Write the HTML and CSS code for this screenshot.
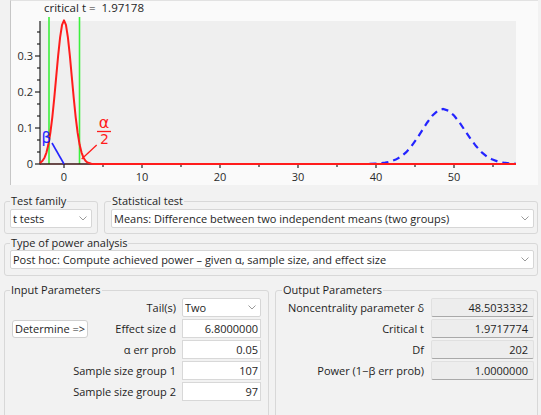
FILE: index.html
```html
<!DOCTYPE html>
<html>
<head>
<meta charset="utf-8">
<link rel="stylesheet" href="styles.css">
</head>
<body>
<div class="chart">
<svg width="527" height="184" viewBox="11 1 527 184">
  <rect class="plotbg" x="40" y="21" width="476" height="143"/>
  <text class="title" x="44" y="12" xml:space="preserve">critical t =  1.97178</text>
  <line class="green" x1="49" y1="17" x2="49" y2="164"/>
  <line class="green" x1="79.5" y1="17" x2="79.5" y2="164"/>
  <g class="axis">
    <line x1="40" y1="21" x2="40" y2="164.5"/>
    <line x1="35" y1="164" x2="40" y2="164"/>
    <line x1="35" y1="128" x2="40" y2="128"/>
    <line x1="35" y1="92" x2="40" y2="92"/>
    <line x1="35" y1="56" x2="40" y2="56"/>
    <line x1="37" y1="152" x2="40" y2="152"/>
    <line x1="37" y1="140" x2="40" y2="140"/>
    <line x1="37" y1="116" x2="40" y2="116"/>
    <line x1="37" y1="104" x2="40" y2="104"/>
    <line x1="37" y1="80" x2="40" y2="80"/>
    <line x1="37" y1="68" x2="40" y2="68"/>
    <line x1="37" y1="44" x2="40" y2="44"/>
    <line x1="37" y1="32" x2="40" y2="32"/>
    <line x1="64" y1="164" x2="64" y2="168"/>
    <line x1="142" y1="164" x2="142" y2="168"/>
    <line x1="220" y1="164" x2="220" y2="168"/>
    <line x1="298" y1="164" x2="298" y2="168"/>
    <line x1="376" y1="164" x2="376" y2="168"/>
    <line x1="454" y1="164" x2="454" y2="168"/>
    <line x1="103" y1="164" x2="103" y2="167"/>
    <line x1="181" y1="164" x2="181" y2="167"/>
    <line x1="259" y1="164" x2="259" y2="167"/>
    <line x1="337" y1="164" x2="337" y2="167"/>
    <line x1="415" y1="164" x2="415" y2="167"/>
    <line x1="493" y1="164" x2="493" y2="167"/>
  </g>
  <g class="ylab">
    <text x="33" y="60">0.3</text>
    <text x="33" y="96">0.2</text>
    <text x="33" y="132">0.1</text>
    <text x="33" y="168">0</text>
  </g>
  <g class="xlab">
    <text x="64" y="181">0</text>
    <text x="142" y="181">10</text>
    <text x="220" y="181">20</text>
    <text x="298" y="181">30</text>
    <text x="376" y="181">40</text>
    <text x="454" y="181">50</text>
  </g>
  <line class="xaxis" x1="40" y1="164" x2="516" y2="164"/>
  <path class="blued" d="M369.5,163.9 L380,163.4 L385.25,162.7 L390.5,161.6 L395.75,159.6 L401,156.6 L406.25,152.1 L411.5,146.1 L416.75,138.8 L422,130.6 L427.25,122.5 L432.5,115.5 L437.75,110.7 L443,109 L448.5,110.7 L454,115.5 L459.5,122.5 L465,130.6 L470.5,138.8 L476,146.1 L481.5,152.1 L487,156.6 L492.5,159.6 L498,161.6 L503.5,162.7 L509,163.4 L516,163.8"/>
  <path class="red" d="M40,163.2 L40.6,162.4 L42.55,160.7 L44.5,157.7 L46.45,152.6 L48.4,144.6 L50.35,132.9 L52.3,117.4 L54.25,98.2 L56.2,76.9 L58.15,55.6 L60.1,37.3 L62.05,24.8 L64,20.4 L65.95,24.8 L67.9,37.3 L69.85,55.6 L71.8,76.9 L73.75,98.2 L75.7,117.4 L77.65,132.9 L79.6,144.6 L81.55,152.6 L83.5,157.7 L85.45,160.7 L87.4,162.4 L91.3,163.7 L95,164 L516,164"/>
  <line class="blue" x1="52" y1="143" x2="64" y2="164"/>
  <text class="beta" x="41.5" y="143">β</text>
  <line class="redt" x1="96.7" y1="145" x2="81.7" y2="159"/>
  <text class="alpha" x="104" y="128">α</text>
  <line class="redt" x1="97" y1="131.5" x2="111" y2="131.5"/>
  <text class="two" x="104.5" y="144">2</text>
</svg>
</div>

<div class="row1">
  <fieldset class="group tf">
    <legend>Test family</legend>
    <div class="combo"><span class="txt">t tests</span><svg class="chev" width="8" height="5" viewBox="0 0 8 5"><path d="M0.5 0.5 L4 4 L7.5 0.5"/></svg></div>
  </fieldset>
  <fieldset class="group st">
    <legend>Statistical test</legend>
    <div class="combo"><span class="txt">Means: Difference between two independent means (two groups)</span><svg class="chev" width="8" height="5" viewBox="0 0 8 5"><path d="M0.5 0.5 L4 4 L7.5 0.5"/></svg></div>
  </fieldset>
</div>

<fieldset class="group pa">
  <legend>Type of power analysis</legend>
  <div class="combo"><span class="txt">Post hoc: Compute achieved power – given α, sample size, and effect size</span><svg class="chev" width="8" height="5" viewBox="0 0 8 5"><path d="M0.5 0.5 L4 4 L7.5 0.5"/></svg></div>
</fieldset>

<div class="params">
  <fieldset class="group in">
    <legend>Input Parameters</legend>
    <div class="prow"><span class="lbl">Tail(s)</span><div class="combo small"><span class="txt">Two</span><svg class="chev" width="8" height="5" viewBox="0 0 8 5"><path d="M0.5 0.5 L4 4 L7.5 0.5"/></svg></div></div>
    <div class="prow"><button class="btn">Determine =&gt;</button><span class="lbl">Effect size d</span><div class="field">6.8000000</div></div>
    <div class="prow"><span class="lbl">α err prob</span><div class="field">0.05</div></div>
    <div class="prow"><span class="lbl">Sample size group 1</span><div class="field">107</div></div>
    <div class="prow"><span class="lbl">Sample size group 2</span><div class="field">97</div></div>
  </fieldset>
  <fieldset class="group out">
    <legend>Output Parameters</legend>
    <div class="prow"><span class="lbl">Noncentrality parameter δ</span><div class="ofield">48.5033332</div></div>
    <div class="prow"><span class="lbl">Critical t</span><div class="ofield">1.9717774</div></div>
    <div class="prow"><span class="lbl">Df</span><div class="ofield">202</div></div>
    <div class="prow"><span class="lbl">Power (1−β err prob)</span><div class="ofield">1.0000000</div></div>
  </fieldset>
</div>
</body>
</html>
```

FILE: styles.css
```css
* { box-sizing: border-box; }
html, body { margin: 0; padding: 0; }
body {
  width: 541px;
  height: 415px;
  overflow: hidden;
  background: #f2f2f2;
  font-family: "Open Sans", "DejaVu Sans", sans-serif;
  font-size: 11px;
  color: #1e1e1e;
}

/* chart */
.chart {
  margin-left: 10px;
  width: 528px;
  height: 185px;
  background: #fafafa;
  border-left: 1px solid #c6c6c6;
  border-top: 1px solid #e2e2e2;
}
.chart svg { display: block; }
.plotbg { fill: #efefef; }
.title { font-family: "Open Sans", sans-serif; font-size: 11.5px; fill: #1e1e1e; white-space: pre; }
.green { stroke: #3cf03c; stroke-width: 1.6; }
.axis line { stroke: #202020; stroke-width: 1.2; }
.xaxis { stroke: #3a1010; stroke-width: 1.6; }
.ylab text { font-family: "Open Sans", sans-serif; font-size: 11px; fill: #2a2a2a; text-anchor: end; }
.xlab text { font-family: "Open Sans", sans-serif; font-size: 11px; fill: #2a2a2a; text-anchor: middle; }
.red { fill: none; stroke: #ff1c1c; stroke-width: 2; stroke-linejoin: round; }
.redt { stroke: #ff1c1c; stroke-width: 1.3; }
.blue { stroke: #2424ff; stroke-width: 1.6; }
.blued { fill: none; stroke: #2424ff; stroke-width: 2.2; stroke-dasharray: 7 5; }
.beta { font-family: "DejaVu Sans", sans-serif; font-size: 15px; fill: #2424ff; }
.alpha { font-family: "DejaVu Sans", sans-serif; font-size: 16px; fill: #ff1c1c; text-anchor: middle; }
.two { font-family: "DejaVu Sans", sans-serif; font-size: 14px; fill: #ff1c1c; text-anchor: middle; }

/* group boxes */
.group {
  margin: 0;
  min-width: 0;
  border: 1px solid #d8d8d8;
  border-radius: 3px;
}
.group legend {
  padding: 0 1px;
  line-height: 14px;
  color: #1e1e1e;
}

.row1 {
  display: flex;
  gap: 6px;
  margin: 9px 3px 0 4px;
}
.tf { width: 94px; padding: 1px 5px 5px 5px; }
.st { flex: 1; padding: 1px 3px 5px 6px; }

.pa { margin: 2px 3px 0 4px; padding: 0 3px 6px 5px; }

.combo {
  display: flex;
  align-items: center;
  height: 19px;
  background: #fff;
  border: 1px solid #d6d6d6;
  border-radius: 2px;
  padding: 0 4px 0 2px;
}
.combo .txt { flex: 1; white-space: nowrap; overflow: hidden; }
.chev { display: block; }
.chev path { fill: none; stroke: #9a9a9a; stroke-width: 1; }

.params {
  display: flex;
  gap: 6px;
  margin: 7px 3px 0 4px;
}
.in { width: 265px; height: 140px; padding: 1px 7px 0 5px; }
.out { flex: 1; height: 140px; padding: 1px 3px 0 6px; }

.prow {
  display: flex;
  align-items: center;
  justify-content: flex-end;
  height: 19px;
  margin-bottom: 2px;
  gap: 6px;
}
.out .prow { gap: 7px; }
.lbl { white-space: nowrap; }
.combo.small { width: 79px; }
.field {
  width: 79px;
  height: 19px;
  background: #fff;
  border: 1px solid #d8d8d8;
  text-align: right;
  padding-right: 2px;
  line-height: 17px;
}
.ofield {
  width: 103px;
  height: 19px;
  background: #ededed;
  border: 1px solid #e0e0e0;
  border-bottom: 1px solid #a9a9a9;
  border-radius: 2px;
  text-align: right;
  padding-right: 5px;
  line-height: 17px;
}
.btn {
  margin: 0 auto 0 2px;
  width: 76px;
  height: 18px;
  padding: 0;
  font: inherit;
  color: #1e1e1e;
  background: #fff;
  border: 1px solid #d0d0d0;
  border-radius: 3px;
}
```
